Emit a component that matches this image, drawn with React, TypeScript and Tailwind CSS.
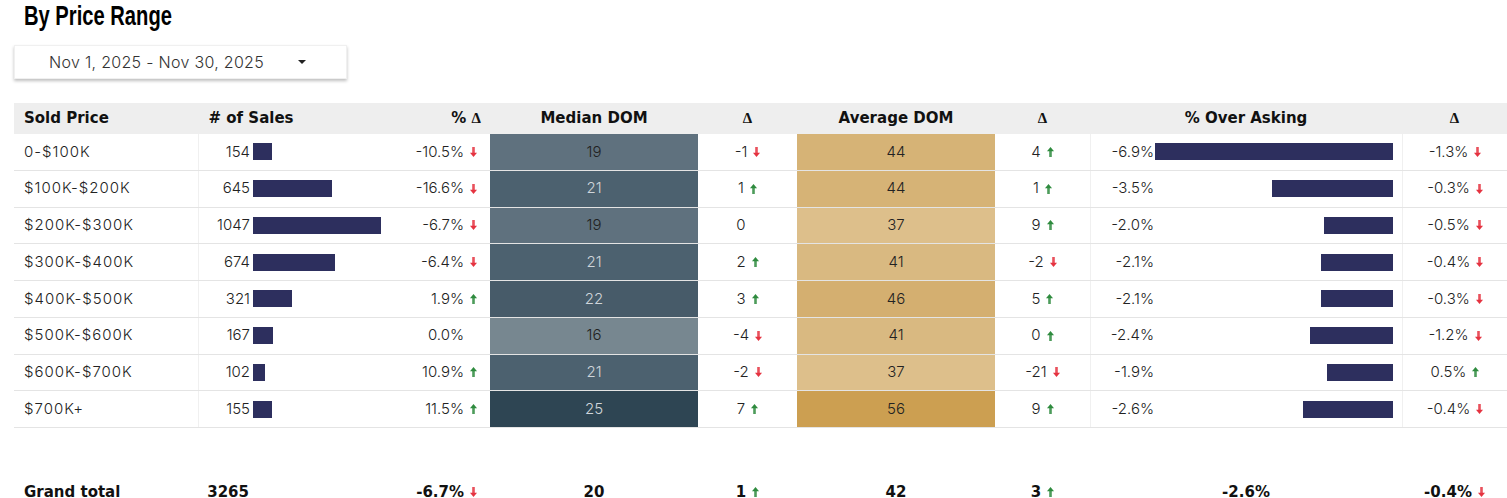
import React from 'react'

type Row = {
    label: string
    sales: number
    salesDelta: string
    salesDir: number
    median: number
    medianDelta: string
    medianDir: number
    avg: number
    avgDelta: string
    avgDir: number
    over: string
    overValue: number
    overDelta: string
    overDir: number
}

const rows: Row[] = [
    { label: '0-$100K', sales: 154, salesDelta: '-10.5%', salesDir: -1, median: 19, medianDelta: '-1', medianDir: -1, avg: 44, avgDelta: '4', avgDir: 1, over: '-6.9%', overValue: 6.9, overDelta: '-1.3%', overDir: -1 },
    { label: '$100K-$200K', sales: 645, salesDelta: '-16.6%', salesDir: -1, median: 21, medianDelta: '1', medianDir: 1, avg: 44, avgDelta: '1', avgDir: 1, over: '-3.5%', overValue: 3.5, overDelta: '-0.3%', overDir: -1 },
    { label: '$200K-$300K', sales: 1047, salesDelta: '-6.7%', salesDir: -1, median: 19, medianDelta: '0', medianDir: 0, avg: 37, avgDelta: '9', avgDir: 1, over: '-2.0%', overValue: 2.0, overDelta: '-0.5%', overDir: -1 },
    { label: '$300K-$400K', sales: 674, salesDelta: '-6.4%', salesDir: -1, median: 21, medianDelta: '2', medianDir: 1, avg: 41, avgDelta: '-2', avgDir: -1, over: '-2.1%', overValue: 2.1, overDelta: '-0.4%', overDir: -1 },
    { label: '$400K-$500K', sales: 321, salesDelta: '1.9%', salesDir: 1, median: 22, medianDelta: '3', medianDir: 1, avg: 46, avgDelta: '5', avgDir: 1, over: '-2.1%', overValue: 2.1, overDelta: '-0.3%', overDir: -1 },
    { label: '$500K-$600K', sales: 167, salesDelta: '0.0%', salesDir: 0, median: 16, medianDelta: '-4', medianDir: -1, avg: 41, avgDelta: '0', avgDir: 1, over: '-2.4%', overValue: 2.4, overDelta: '-1.2%', overDir: -1 },
    { label: '$600K-$700K', sales: 102, salesDelta: '10.9%', salesDir: 1, median: 21, medianDelta: '-2', medianDir: -1, avg: 37, avgDelta: '-21', avgDir: -1, over: '-1.9%', overValue: 1.9, overDelta: '0.5%', overDir: 1 },
    { label: '$700K+', sales: 155, salesDelta: '11.5%', salesDir: 1, median: 25, medianDelta: '7', medianDir: 1, avg: 56, avgDelta: '9', avgDir: 1, over: '-2.6%', overValue: 2.6, overDelta: '-0.4%', overDir: -1 },
]

// heatmap colours picked from the report
const medianBg: Record<number, string> = { 16: '#778790', 19: '#5f717e', 21: '#4c616f', 22: '#475b69', 25: '#2e4553' }
const avgBg: Record<number, string> = { 37: '#ddbf8b', 41: '#d9b981', 44: '#d6b376', 46: '#d4af70', 56: '#cc9f51' }

const cols = 'grid grid-cols-[184px_106px_186px_208px_99px_198px_95px_312px_105px]'
const body = { fontFamily: 'Inter, "Noto Sans", sans-serif' }
const bold = { fontFamily: '"DejaVu Sans", Inter, sans-serif' }

function Arrow({ dir }: { dir: number }) {
    if (dir === 0) return <span className="inline-block w-[7px]" />
    const color = dir > 0 ? '#2e8b3e' : '#e53340'
    return (
        <svg width="7" height="10" viewBox="0 0 7 10" className="shrink-0">
            {dir > 0 ? (
                <>
                    <polygon points="3.5,0 7,4.2 0,4.2" fill={color} />
                    <rect x="2.2" y="4" width="2.6" height="6" fill={color} opacity="0.85" />
                </>
            ) : (
                <>
                    <rect x="2.2" y="0" width="2.6" height="6" fill={color} opacity="0.85" />
                    <polygon points="0,5.8 7,5.8 3.5,10" fill={color} />
                </>
            )}
        </svg>
    )
}

function Delta({ value, dir }: { value: string; dir: number }) {
    return (
        <div className="flex items-center justify-center gap-[6px]">
            <span>{value}</span>
            <Arrow dir={dir} />
        </div>
    )
}

function DeltaSign() {
    return <span style={{ fontFamily: '"Liberation Serif", serif' }} className="font-bold text-[15px]">Δ</span>
}

export default function App() {
    return (
        <div className="w-[1507px] h-[498px] overflow-hidden bg-white text-[#222] font-light" style={body}>
            <h2 className="pl-[24px] h-[31px] leading-[31px] whitespace-nowrap">
                <span
                    className="inline-block origin-left scale-x-[0.72] text-[28px] font-bold text-black"
                    style={{ fontFamily: '"Liberation Sans", Arial, sans-serif' }}
                >
                    By Price Range
                </span>
            </h2>

            <div className="ml-[14px] mt-[14px] w-[333px] h-[34px] flex items-center bg-white shadow-[0_2px_3px_rgba(0,0,0,0.25)] border border-[#f0f0f0]">
                <span className="pl-[34px] text-[16px] tracking-[0.3px] text-[#333]">Nov 1, 2025 - Nov 30, 2025</span>
                <span className="ml-auto mr-[40px] w-0 h-0 border-l-[4px] border-r-[4px] border-t-[4px] border-l-transparent border-r-transparent border-t-[#222]" />
            </div>

            <div className="ml-[14px] mt-[24px] w-[1493px]">
                {/* header */}
                <div className={`${cols} h-[31px] bg-[#eeeeee] items-center text-[15px] font-bold text-[#111]`} style={bold}>
                    <div className="pl-[10px]">Sold Price</div>
                    <div className="text-center whitespace-nowrap">
                        # of Sales
                    </div>
                    <div className="text-right pr-[9px]">
                        % <DeltaSign />
                    </div>
                    <div className="text-center">Median DOM</div>
                    <div className="text-center"><DeltaSign /></div>
                    <div className="text-center">Average DOM</div>
                    <div className="text-center"><DeltaSign /></div>
                    <div className="text-center">% Over Asking</div>
                    <div className="text-center"><DeltaSign /></div>
                </div>

                {/* rows */}
                {rows.map((r) => (
                    <div key={r.label} className={`${cols} h-[36.75px] border-b border-[#e4e4e4] text-[15px]`}>
                        <div className="pl-[10px] flex items-center tracking-[1px]">{r.label}</div>
                        <div className="flex items-center border-l border-[#f0f0f0]">
                            <span className="w-[51px] text-right shrink-0">{r.sales}</span>
                            <span
                                className="ml-[3px] h-[17px] bg-[#2d2f5e] shrink-0"
                                style={{ width: Math.round(r.sales * 0.1223) }}
                            />
                        </div>
                        <div className="flex items-center justify-end gap-[6px] pr-[13px]">
                            <span>{r.salesDelta}</span>
                            <Arrow dir={r.salesDir} />
                        </div>
                        <div
                            className={`flex items-center justify-center ${r.median === 19 || r.median === 16 ? 'text-[#222]' : 'text-[#cfd5da]'}`}
                            style={{ backgroundColor: medianBg[r.median] }}
                        >
                            {r.median}
                        </div>
                        <div className="flex items-center justify-center">
                            <Delta value={r.medianDelta} dir={r.medianDir} />
                        </div>
                        <div className="flex items-center justify-center" style={{ backgroundColor: avgBg[r.avg] }}>
                            {r.avg}
                        </div>
                        <div className="flex items-center justify-center">
                            <Delta value={r.avgDelta} dir={r.avgDir} />
                        </div>
                        <div className="flex items-center border-l border-[#f0f0f0]">
                            <span className="w-[63px] text-right shrink-0">{r.over}</span>
                            <div className="flex-1 flex justify-end pr-[9px]">
                                <span
                                    className="h-[17px] bg-[#2d2f5e]"
                                    style={{ width: Math.round(r.overValue * 34.5) }}
                                />
                            </div>
                        </div>
                        <div className="flex items-center justify-center border-l border-[#f0f0f0]">
                            <Delta value={r.overDelta} dir={r.overDir} />
                        </div>
                    </div>
                ))}

                {/* grand total */}
                <div className={`${cols} mt-[46px] h-[36px] items-center text-[15px] font-bold text-[#111]`} style={bold}>
                    <div className="pl-[10px]">Grand total</div>
                    <div className="flex">
                        <span className="w-[51px] text-right">3265</span>
                    </div>
                    <div className="flex items-center justify-end gap-[6px] pr-[13px]">
                        <span>-6.7%</span>
                        <Arrow dir={-1} />
                    </div>
                    <div className="text-center">20</div>
                    <Delta value="1" dir={1} />
                    <div className="text-center">42</div>
                    <Delta value="3" dir={1} />
                    <div className="text-center">-2.6%</div>
                    <Delta value="-0.4%" dir={-1} />
                </div>
            </div>
        </div>
    )
}
